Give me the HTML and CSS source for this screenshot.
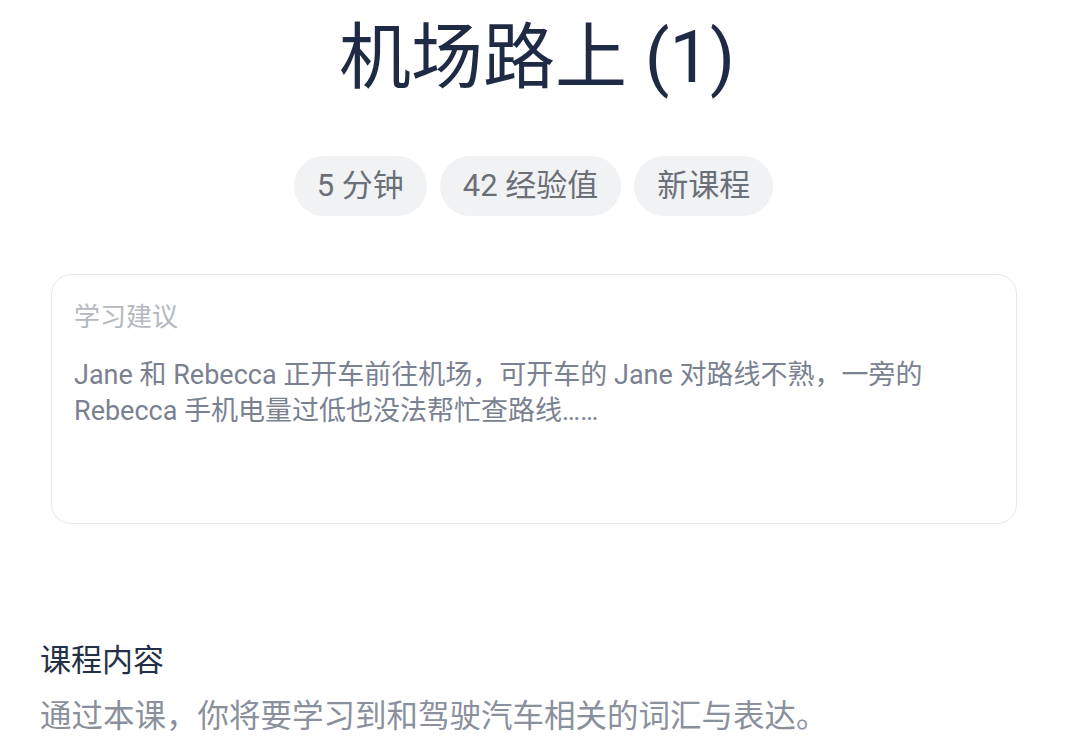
FILE: index.html
```html
<!DOCTYPE html>
<html lang="zh-CN">
<head>
<meta charset="utf-8">
<title>机场路上 (1)</title>
<link rel="stylesheet" href="styles.css">
</head>
<body>
<main class="page">
  <h1 class="title">机场路上 (1)</h1>
  <div class="chips">
    <span class="chip">5 分钟</span>
    <span class="chip">42 经验值</span>
    <span class="chip">新课程</span>
  </div>
  <section class="card">
    <div class="card-label">学习建议</div>
    <p class="card-text">Jane 和 Rebecca 正开车前往机场，可开车的 Jane 对路线不熟，一旁的 Rebecca 手机电量过低也没法帮忙查路线……</p>
  </section>
  <section class="content">
    <h2 class="content-title">课程内容</h2>
    <p class="content-text">通过本课，你将要学习到和驾驶汽车相关的词汇与表达。</p>
  </section>
</main>
</body>
</html>
```

FILE: styles.css
```css
html, body {
  margin: 0;
  padding: 0;
  background: #ffffff;
}
body {
  font-family: Roboto, "Noto Sans CJK SC", sans-serif;
  width: 1074px;
  height: 743px;
  overflow: hidden;
}
.page {
  display: flex;
  flex-direction: column;
}
.title {
  margin: 10px 0 0;
  text-align: center;
  font-size: 72px;
  line-height: 96px;
  font-weight: 400;
  color: #1f2a44;
}
.chips {
  margin-top: 50px;
  display: flex;
  justify-content: center;
  gap: 13px;
  padding-right: 7px;
}
.chip {
  height: 60px;
  line-height: 60px;
  padding: 0 23px;
  border-radius: 30px;
  background: #f1f2f4;
  color: #6b6f78;
  font-size: 31px;
}
.card {
  margin: 58px 0 0 51px;
  width: 966px;
  height: 250px;
  border: 1px solid #e6e8ec;
  border-radius: 20px;
  padding: 24px 22px 0;
  box-sizing: border-box;
}
.card-label {
  font-size: 26px;
  line-height: 36px;
  color: #b4b8c0;
}
.card-text {
  margin: 22px 0 0;
  font-size: 27px;
  line-height: 36px;
  color: #7a8191;
}
.content {
  margin: 117px 0 0 40px;
}
.content-title {
  margin: 0;
  font-size: 31px;
  line-height: 40px;
  font-weight: 400;
  color: #252f45;
}
.content-text {
  margin: 16px 0 0;
  font-size: 31.5px;
  line-height: 40px;
  color: #8a909c;
}
```
